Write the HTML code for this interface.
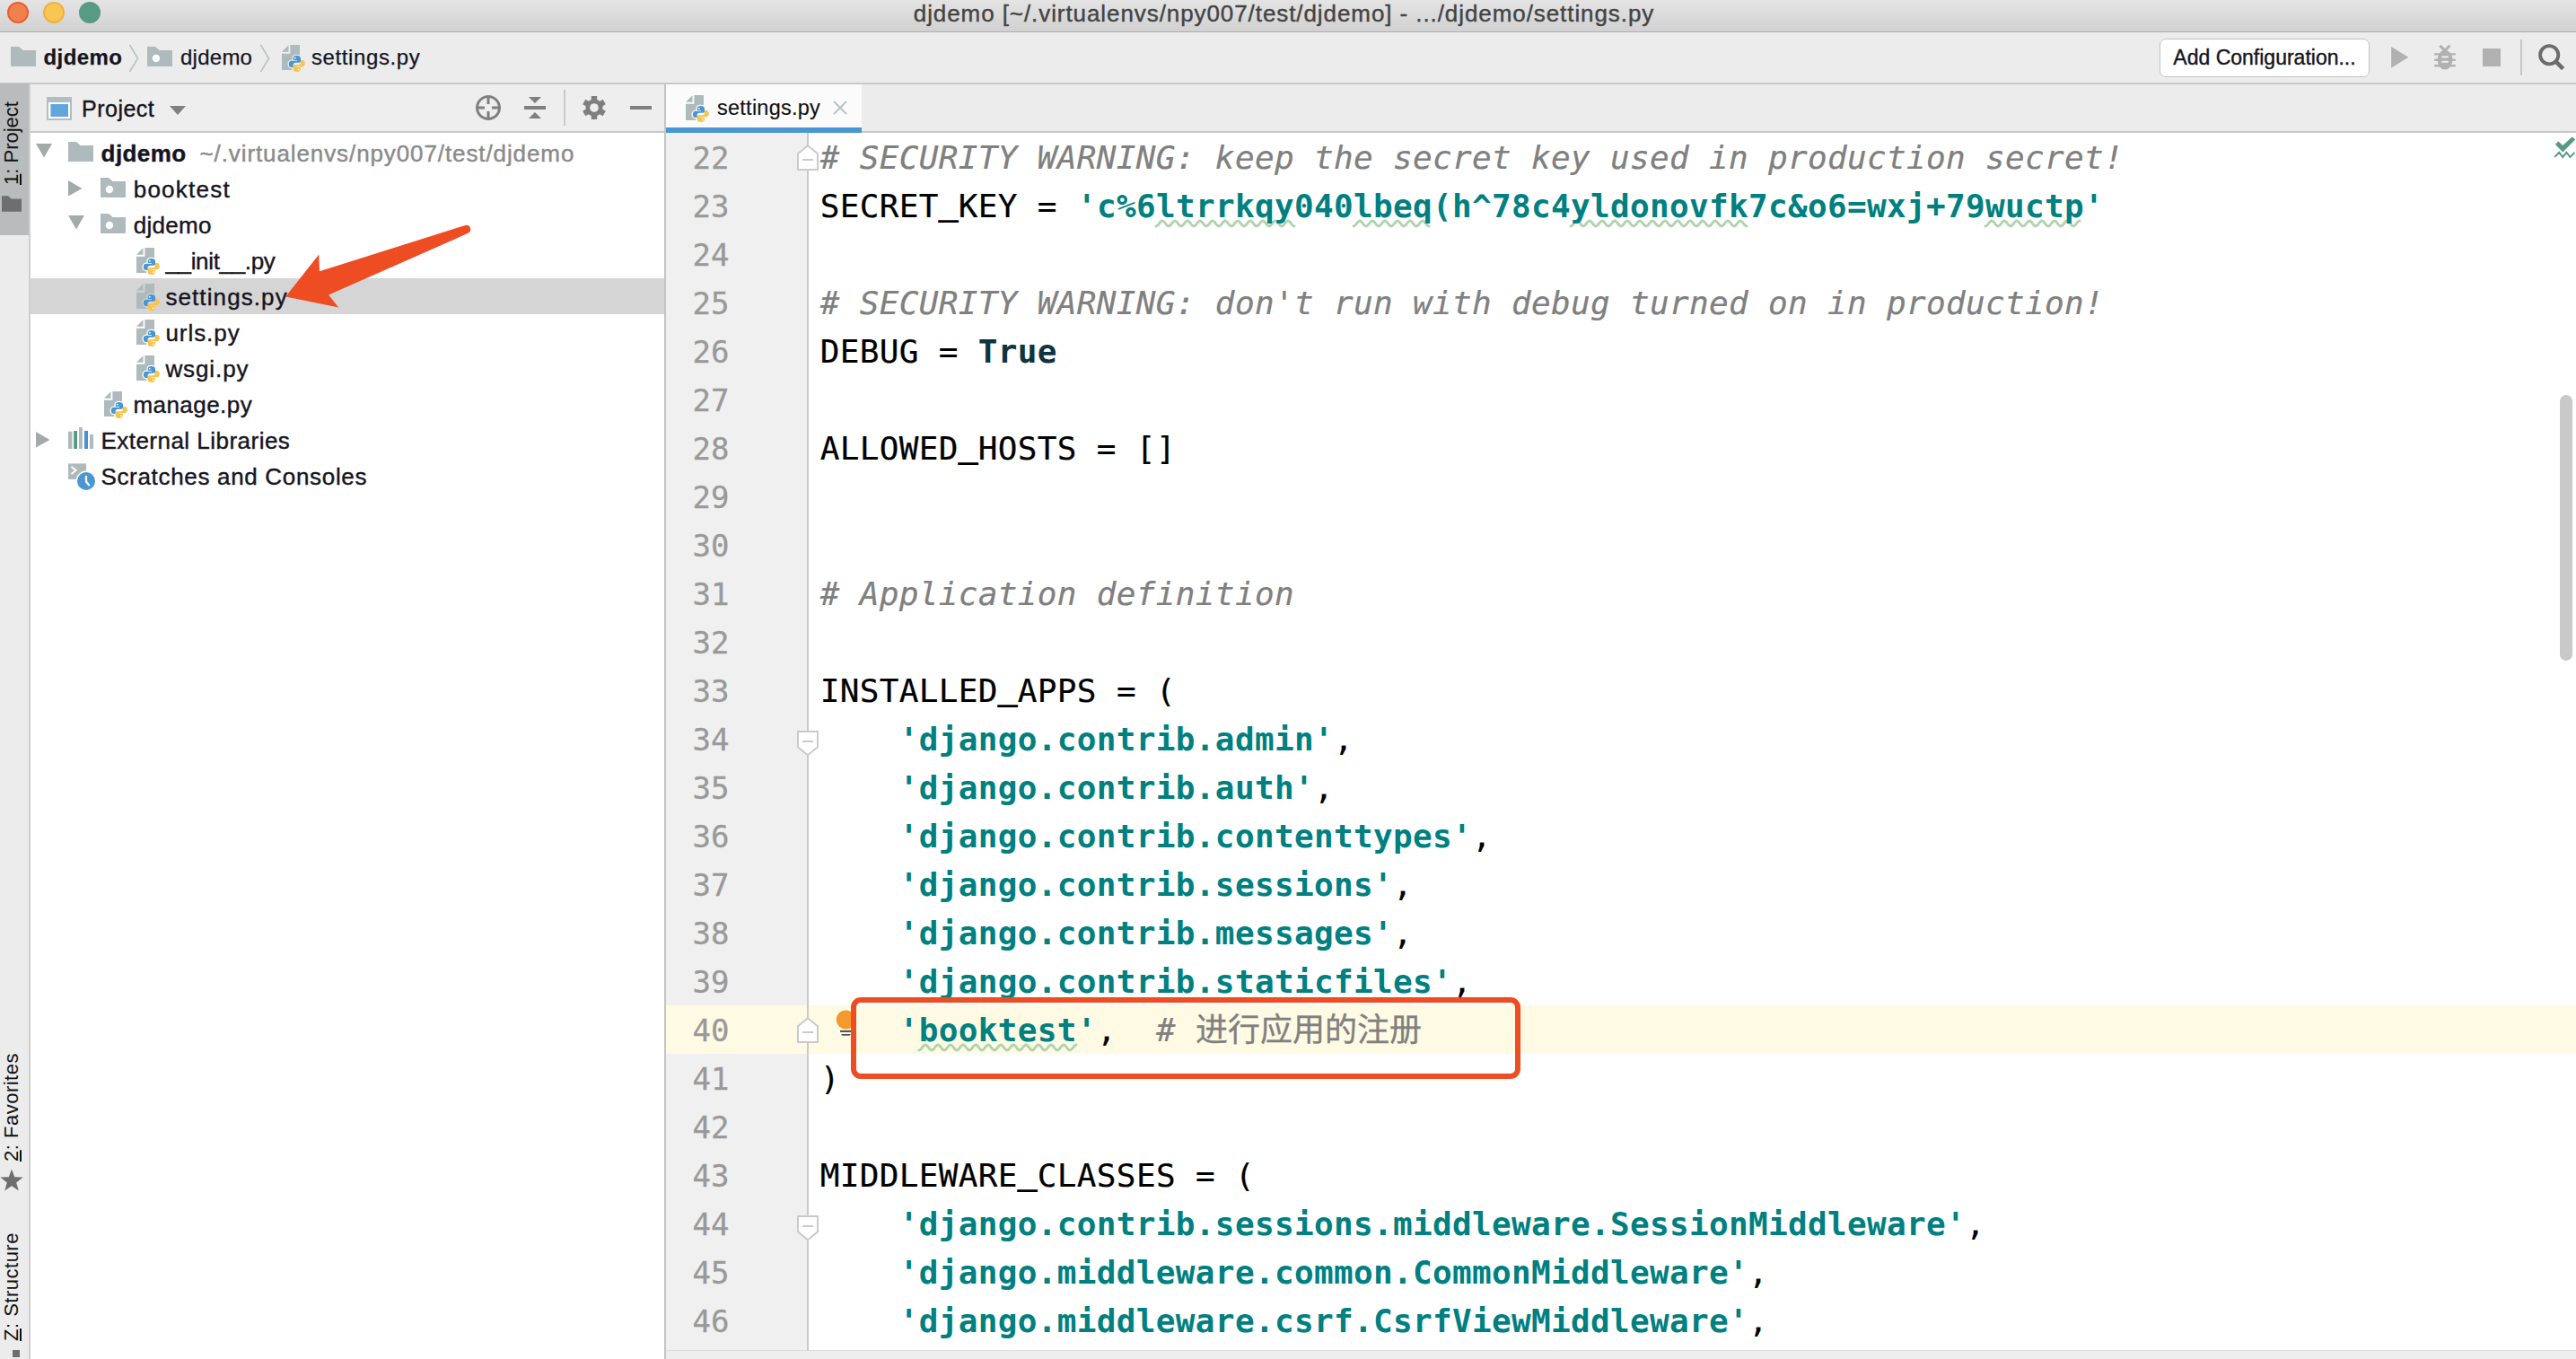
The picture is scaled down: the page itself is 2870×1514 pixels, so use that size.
<!DOCTYPE html>
<html lang="en"><head><meta charset="utf-8"><title>djdemo - settings.py</title>
<style>
html,body{margin:0;padding:0;}
body{width:2870px;height:1514px;overflow:hidden;position:relative;background:#fff;font-family:"Liberation Sans", "Noto Sans CJK SC", sans-serif;color:#111;}
.abs{position:absolute;display:block;}
.t{position:absolute;white-space:pre;line-height:1;-webkit-text-stroke:0.4px;}
#titlebar{left:0;top:0;width:2870px;height:35px;background:linear-gradient(#e4e4e4,#d1d1d1);border-bottom:1px solid #a9afaf;}
#title{left:0;top:-1.5px;width:2870px;height:35px;line-height:33px;text-align:center;font-size:26px;color:#444;letter-spacing:0.92px;text-indent:-9px;}
.light{border-radius:50%;width:24px;height:24px;top:2px;box-sizing:border-box;}
#nav{left:0;top:36px;width:2870px;height:56px;background:#ececec;border-bottom:2px solid #c9c9c9;box-sizing:content-box;}
.navt{font-size:24px;height:56px;line-height:56px;top:36px;color:#15151f;-webkit-text-stroke:0.25px;}
#strip{left:0;top:94px;width:32px;height:1420px;background:#ececec;border-right:2px solid #cfcfcf;}
#striptab{left:0;top:93px;width:32px;height:169px;background:#b8bcbc;}
.vt{position:absolute;white-space:pre;font-size:22px;line-height:26px;height:26px;transform-origin:0 0;transform:rotate(-90deg);color:#111;}
#phead{left:34px;top:94px;width:706px;height:52px;background:#eeeeee;border-bottom:2px solid #c9c9c9;}
#ptree{left:34px;top:148px;width:706px;height:1366px;background:#fff;}
#psel{left:34px;top:310px;width:706px;height:40px;background:#d5d5d5;}
#pdiv{left:740px;top:94px;width:2px;height:1420px;background:#c4c4c4;}
.tr{font-size:26px;height:40px;line-height:40px;color:#15151f;margin-top:0.5px;}
#tabbar{left:742px;top:94px;width:2128px;height:52px;background:#ececec;border-bottom:2px solid #c9c9c9;}
#tab{left:742px;top:94px;width:218px;height:48px;background:#fbfbfb;border-bottom:6px solid #4897d3;}
#gutter{left:742px;top:148px;width:157px;height:1356px;background:#f0f0f0;border-right:2px solid #cacaca;}
#curline{left:742px;top:1120px;width:2128px;height:54px;background:#fffae3;}
#bottom{left:742px;top:1504px;width:2128px;height:10px;background:#eeeeee;border-top:1px solid #dcdcdc;box-sizing:border-box;}
.ln{position:absolute;left:742px;width:70.5px;text-align:right;font-family:"DejaVu Sans Mono", "Liberation Mono", "Noto Sans CJK SC", monospace;font-size:34px;line-height:54px;height:54px;color:#999;margin-top:1px;-webkit-text-stroke:0.3px;}
.cl{position:absolute;left:913.8px;margin-top:0.7px;white-space:pre;font-family:"DejaVu Sans Mono", "Liberation Mono", "Noto Sans CJK SC", monospace;font-size:36px;line-height:54px;height:54px;color:#000;letter-spacing:0.33px;-webkit-text-stroke:0.22px;}
.us{position:relative;top:-3px;-webkit-text-stroke:1.2px #000;}
.c{color:#808080;font-style:italic;}
.s{color:#008080;font-weight:bold;-webkit-text-stroke:0;}
.k{color:#0e3440;font-weight:bold;-webkit-text-stroke:0;}
.cj{font-style:normal;font-family:"DejaVu Sans Mono","Noto Sans CJK SC",monospace;letter-spacing:0;line-height:0;-webkit-text-stroke:0.3px;}
</style></head><body>

<svg width="0" height="0" style="position:absolute"><defs><clipPath id="pyclip"><path d="M9.4 0 H20 V28 H0 V9.7 H9.4 Z"/></clipPath></defs></svg>
<div id="titlebar" class="abs"></div>
<div class="abs light" style="left:8px;background:#f0814f;border:2px solid #ec5e2e"></div>
<div class="abs light" style="left:48px;background:#f9c74f;border:2px solid #f2ae42"></div>
<div class="abs light" style="left:88px;background:#579b84;border:2px solid #579b84"></div>
<div id="title" class="t">djdemo [~/.virtualenvs/npy007/test/djdemo] - .../djdemo/settings.py</div>
<div id="nav" class="abs"></div>
<svg class="abs" style="left:12px;top:52px" width="28" height="22" viewBox="0 0 28 22"><path d="M0 0 H9 L13.6 4 H28 V22 H0 Z" fill="#afbabc"/></svg>
<div class="t navt" style="left:48.5px;top:36px;letter-spacing:0.4px;font-weight:bold">djdemo</div>
<svg class="abs" style="left:142px;top:48px" width="16" height="34" viewBox="0 0 16 34"><path d="M2.5 2 L11.5 17 L2.5 32" fill="none" stroke="#b9c2c4" stroke-width="1.6"/></svg>
<svg class="abs" style="left:164px;top:52px" width="28" height="22" viewBox="0 0 28 22"><path d="M0 0 H9 L13.6 4 H28 V22 H0 Z" fill="#afbabc"/><circle cx="9.9" cy="13" r="4.2" fill="#fff"/></svg>
<div class="t navt" style="left:201px;top:36px;letter-spacing:0.25px;">djdemo</div>
<svg class="abs" style="left:288px;top:48px" width="16" height="34" viewBox="0 0 16 34"><path d="M2.5 2 L11.5 17 L2.5 32" fill="none" stroke="#b9c2c4" stroke-width="1.6"/></svg>
<svg class="abs" style="left:314px;top:50px" width="28" height="31" viewBox="0 0 28 31">
<path d="M0 7.8 L7.5 0.2 V7.8 Z" fill="#afbabc"/>
<path d="M9.4 0 H20 V28 H0 V9.7 H9.4 Z" fill="#afbabc"/>
<g clip-path="url(#pyclip)"><g transform="translate(7.8,12)" fill="#ececec" stroke="#ececec" stroke-width="2.6"><path d="M9 0 C5.5 0 5 1.5 5 3 V5 H9.2 V5.8 H3 C1 5.8 0 7.5 0 9.5 C0 11.5 1 13 3 13 H4.8 V10.5 C4.8 8.8 6 7.8 7.5 7.8 H11.5 C12.8 7.8 13.2 6.8 13.2 5.8 V3 C13.2 1 11.5 0 9 0 Z"/><path d="M9 18 C12.5 18 13 16.5 13 15 V13 H8.8 V12.2 H15 C17 12.2 18 10.5 18 8.5 C18 6.5 17 5 15 5 H13.2 V7.5 C13.2 9.2 12 10.2 10.5 10.2 H6.5 C5.2 10.2 4.8 11.2 4.8 12.2 V15 C4.8 17 6.5 18 9 18 Z"/></g></g>
<g transform="translate(7.8,12)"><path d="M9 18 C12.5 18 13 16.5 13 15 V13 H8.8 V12.2 H15 C17 12.2 18 10.5 18 8.5 C18 6.5 17 5 15 5 H13.2 V7.5 C13.2 9.2 12 10.2 10.5 10.2 H6.5 C5.2 10.2 4.8 11.2 4.8 12.2 V15 C4.8 17 6.5 18 9 18 Z" fill="#f8c44c"/><path d="M9 0 C5.5 0 5 1.5 5 3 V5 H9.2 V5.8 H3 C1 5.8 0 7.5 0 9.5 C0 11.5 1 13 3 13 H4.8 V10.5 C4.8 8.8 6 7.8 7.5 7.8 H11.5 C12.8 7.8 13.2 6.8 13.2 5.8 V3 C13.2 1 11.5 0 9 0 Z" fill="#4a96d2"/>
<circle cx="7" cy="2.7" r="0.9" fill="#fff"/><circle cx="11" cy="15.3" r="0.9" fill="#fff"/></g></svg>
<div class="t navt" style="left:347px;top:36px;letter-spacing:0.6px;">settings.py</div>
<div class="abs" style="left:2406px;top:43px;width:232px;height:41px;background:#fff;border:1px solid #c4c4c4;border-radius:7px;"></div>
<div class="t " style="left:2406px;top:43px;width:234px;text-align:center;font-size:23px;line-height:43px;color:#15151f">Add Configuration...</div>
<svg class="abs" style="left:2660px;top:48px" width="200" height="40" viewBox="0 0 200 40" overflow="visible"><path d="M4.1 4 L23.3 15.85 L4.1 27.7 Z" fill="#b1b1b1"/><g fill="#b1b1b1"><ellipse cx="64" cy="18.7" rx="8.3" ry="10.9"/><rect x="52.2" y="11.2" width="23.6" height="2.3"/><rect x="52.2" y="17.6" width="23.6" height="2.4"/><rect x="52.2" y="24" width="23.6" height="2.4"/></g><path d="M58.3 2.7 L63.9 8.4 L69.4 2.7" fill="none" stroke="#b1b1b1" stroke-width="3"/><rect x="60.4" y="14.4" width="7.4" height="2" fill="#ececec"/><rect x="60.4" y="19.8" width="7.4" height="2.1" fill="#ececec"/><rect x="106" y="6.1" width="20" height="19.9" fill="#b1b1b1"/><rect x="148" y="-4" width="2" height="39.7" fill="#c6c6c6"/><circle cx="180.2" cy="13.3" r="10.1" fill="none" stroke="#6b6b6b" stroke-width="3.8"/><path d="M187.6 20.6 L195.6 28.6" stroke="#6b6b6b" stroke-width="4.6" stroke-linecap="butt"/></svg>
<div id="strip" class="abs"></div>
<div id="striptab" class="abs"></div>
<div class="vt" style="left:0px;top:206px;"><u>1</u>: Project</div>
<svg class="abs" style="left:2px;top:218px" width="22" height="18" viewBox="0 0 28 22"><path d="M0 0 H9 L13.6 4 H28 V22 H0 Z" fill="#6e6e6e"/></svg>
<div class="vt" style="left:0px;top:1294px;letter-spacing:0.5px"><u>2</u>: Favorites</div>
<svg class="abs" style="left:0px;top:1302px" width="26" height="26" viewBox="0 0 26 26"><path d="M13 0.5 L16.2 9.3 L25.6 9.6 L18.2 15.4 L20.8 24.5 L13 19.2 L5.2 24.5 L7.8 15.4 L0.4 9.6 L9.8 9.3 Z" fill="#6e6e6e"/></svg>
<div class="vt" style="left:0px;top:1494px;letter-spacing:0.5px"><u>Z</u>: Structure</div>
<div class="abs" style="left:14px;top:1504px;width:8px;height:8px;background:#6e6e6e"></div>
<div id="phead" class="abs"></div>
<div id="ptree" class="abs"></div>
<div id="psel" class="abs"></div>
<div id="pdiv" class="abs"></div>
<svg class="abs" style="left:52px;top:108px" width="28" height="26" viewBox="0 0 28 26"><rect x="0" y="0" width="28" height="26" fill="#b3bec1"/><rect x="2" y="6" width="24" height="18" fill="#fff"/><rect x="4.4" y="8" width="19.6" height="14" fill="#62a5dc"/></svg>
<div class="t " style="left:91px;top:94.6px;letter-spacing:0.5px;font-size:25px;line-height:52px;color:#15151f">Project</div>
<svg class="abs" style="left:189px;top:118px" width="18" height="10" viewBox="0 0 18 10"><path d="M0 0 H18 L9 10 Z" fill="#808080"/></svg>
<svg class="abs" style="left:520px;top:100px" width="216" height="42" viewBox="0 0 216 42"><g fill="#7f7f7f"><path fill-rule="evenodd" d="M24 6 a14 14 0 1 0 0.001 0 Z M24 9 a11 11 0 1 1 -0.001 0 Z"/><rect x="22.5" y="7" width="3" height="9"/><rect x="22.5" y="24" width="3" height="9"/><rect x="11" y="18.5" width="9" height="3"/><rect x="28" y="18.5" width="9" height="3"/><rect x="64" y="18" width="24" height="4"/><path d="M69 8 H83 L76 15 Z"/><path d="M69 32 H83 L76 25 Z"/><rect x="182" y="18" width="24" height="4"/></g><rect x="108" y="0" width="2" height="40" fill="#c9c9c9"/><g transform="translate(142,20)" fill="#7f7f7f"><path fill-rule="evenodd" d="M0 -9.5 a9.5 9.5 0 1 0 0.001 0 Z M0 -4.8 a4.8 4.8 0 1 1 -0.001 0 Z"/><rect x="-3.2" y="-13" width="6.4" height="6" transform="rotate(0)"/><rect x="-3.2" y="-13" width="6.4" height="6" transform="rotate(60)"/><rect x="-3.2" y="-13" width="6.4" height="6" transform="rotate(120)"/><rect x="-3.2" y="-13" width="6.4" height="6" transform="rotate(180)"/><rect x="-3.2" y="-13" width="6.4" height="6" transform="rotate(240)"/><rect x="-3.2" y="-13" width="6.4" height="6" transform="rotate(300)"/></g></svg>
<svg class="abs" style="left:40px;top:160px" width="18" height="16" viewBox="0 0 18 16"><path d="M0 0 H18 L9 15.5 Z" fill="#a3aaaa"/></svg>
<svg class="abs" style="left:76px;top:158px" width="28" height="22" viewBox="0 0 28 22"><path d="M0 0 H9 L13.6 4 H28 V22 H0 Z" fill="#afbabc"/></svg>
<div class="t tr" style="left:112.6px;top:150px;letter-spacing:0.4px;"><b>djdemo</b></div>
<div class="t tr" style="left:222.5px;top:150px;letter-spacing:0.9px;color:#8a8a8a">~/.virtualenvs/npy007/test/djdemo</div>
<svg class="abs" style="left:76px;top:201px" width="16" height="18" viewBox="0 0 16 18"><path d="M0 0 L15.5 9 L0 17.5 Z" fill="#a3aaaa"/></svg>
<svg class="abs" style="left:112px;top:198px" width="28" height="22" viewBox="0 0 28 22"><path d="M0 0 H9 L13.6 4 H28 V22 H0 Z" fill="#afbabc"/><circle cx="9.9" cy="13" r="4.2" fill="#fff"/></svg>
<div class="t tr" style="left:148.7px;top:190px;letter-spacing:1.25px;">booktest</div>
<svg class="abs" style="left:76px;top:240px" width="18" height="16" viewBox="0 0 18 16"><path d="M0 0 H18 L9 15.5 Z" fill="#a3aaaa"/></svg>
<svg class="abs" style="left:112px;top:238px" width="28" height="22" viewBox="0 0 28 22"><path d="M0 0 H9 L13.6 4 H28 V22 H0 Z" fill="#afbabc"/><circle cx="9.9" cy="13" r="4.2" fill="#fff"/></svg>
<div class="t tr" style="left:148.7px;top:230px;letter-spacing:0.3px;">djdemo</div>
<svg class="abs" style="left:152px;top:276px" width="28" height="31" viewBox="0 0 28 31">
<path d="M0 7.8 L7.5 0.2 V7.8 Z" fill="#afbabc"/>
<path d="M9.4 0 H20 V28 H0 V9.7 H9.4 Z" fill="#afbabc"/>
<g clip-path="url(#pyclip)"><g transform="translate(7.8,12)" fill="#fff" stroke="#fff" stroke-width="2.6"><path d="M9 0 C5.5 0 5 1.5 5 3 V5 H9.2 V5.8 H3 C1 5.8 0 7.5 0 9.5 C0 11.5 1 13 3 13 H4.8 V10.5 C4.8 8.8 6 7.8 7.5 7.8 H11.5 C12.8 7.8 13.2 6.8 13.2 5.8 V3 C13.2 1 11.5 0 9 0 Z"/><path d="M9 18 C12.5 18 13 16.5 13 15 V13 H8.8 V12.2 H15 C17 12.2 18 10.5 18 8.5 C18 6.5 17 5 15 5 H13.2 V7.5 C13.2 9.2 12 10.2 10.5 10.2 H6.5 C5.2 10.2 4.8 11.2 4.8 12.2 V15 C4.8 17 6.5 18 9 18 Z"/></g></g>
<g transform="translate(7.8,12)"><path d="M9 18 C12.5 18 13 16.5 13 15 V13 H8.8 V12.2 H15 C17 12.2 18 10.5 18 8.5 C18 6.5 17 5 15 5 H13.2 V7.5 C13.2 9.2 12 10.2 10.5 10.2 H6.5 C5.2 10.2 4.8 11.2 4.8 12.2 V15 C4.8 17 6.5 18 9 18 Z" fill="#f8c44c"/><path d="M9 0 C5.5 0 5 1.5 5 3 V5 H9.2 V5.8 H3 C1 5.8 0 7.5 0 9.5 C0 11.5 1 13 3 13 H4.8 V10.5 C4.8 8.8 6 7.8 7.5 7.8 H11.5 C12.8 7.8 13.2 6.8 13.2 5.8 V3 C13.2 1 11.5 0 9 0 Z" fill="#4a96d2"/>
<circle cx="7" cy="2.7" r="0.9" fill="#fff"/><circle cx="11" cy="15.3" r="0.9" fill="#fff"/></g></svg>
<div class="t tr" style="left:184.4px;top:270px;letter-spacing:-0.33px;">__init__.py</div>
<svg class="abs" style="left:152px;top:316px" width="28" height="31" viewBox="0 0 28 31">
<path d="M0 7.8 L7.5 0.2 V7.8 Z" fill="#afbabc"/>
<path d="M9.4 0 H20 V28 H0 V9.7 H9.4 Z" fill="#afbabc"/>
<g clip-path="url(#pyclip)"><g transform="translate(7.8,12)" fill="#d5d5d5" stroke="#d5d5d5" stroke-width="2.6"><path d="M9 0 C5.5 0 5 1.5 5 3 V5 H9.2 V5.8 H3 C1 5.8 0 7.5 0 9.5 C0 11.5 1 13 3 13 H4.8 V10.5 C4.8 8.8 6 7.8 7.5 7.8 H11.5 C12.8 7.8 13.2 6.8 13.2 5.8 V3 C13.2 1 11.5 0 9 0 Z"/><path d="M9 18 C12.5 18 13 16.5 13 15 V13 H8.8 V12.2 H15 C17 12.2 18 10.5 18 8.5 C18 6.5 17 5 15 5 H13.2 V7.5 C13.2 9.2 12 10.2 10.5 10.2 H6.5 C5.2 10.2 4.8 11.2 4.8 12.2 V15 C4.8 17 6.5 18 9 18 Z"/></g></g>
<g transform="translate(7.8,12)"><path d="M9 18 C12.5 18 13 16.5 13 15 V13 H8.8 V12.2 H15 C17 12.2 18 10.5 18 8.5 C18 6.5 17 5 15 5 H13.2 V7.5 C13.2 9.2 12 10.2 10.5 10.2 H6.5 C5.2 10.2 4.8 11.2 4.8 12.2 V15 C4.8 17 6.5 18 9 18 Z" fill="#f8c44c"/><path d="M9 0 C5.5 0 5 1.5 5 3 V5 H9.2 V5.8 H3 C1 5.8 0 7.5 0 9.5 C0 11.5 1 13 3 13 H4.8 V10.5 C4.8 8.8 6 7.8 7.5 7.8 H11.5 C12.8 7.8 13.2 6.8 13.2 5.8 V3 C13.2 1 11.5 0 9 0 Z" fill="#4a96d2"/>
<circle cx="7" cy="2.7" r="0.9" fill="#fff"/><circle cx="11" cy="15.3" r="0.9" fill="#fff"/></g></svg>
<div class="t tr" style="left:184.4px;top:310px;letter-spacing:1.1px;">settings.py</div>
<svg class="abs" style="left:152px;top:356px" width="28" height="31" viewBox="0 0 28 31">
<path d="M0 7.8 L7.5 0.2 V7.8 Z" fill="#afbabc"/>
<path d="M9.4 0 H20 V28 H0 V9.7 H9.4 Z" fill="#afbabc"/>
<g clip-path="url(#pyclip)"><g transform="translate(7.8,12)" fill="#fff" stroke="#fff" stroke-width="2.6"><path d="M9 0 C5.5 0 5 1.5 5 3 V5 H9.2 V5.8 H3 C1 5.8 0 7.5 0 9.5 C0 11.5 1 13 3 13 H4.8 V10.5 C4.8 8.8 6 7.8 7.5 7.8 H11.5 C12.8 7.8 13.2 6.8 13.2 5.8 V3 C13.2 1 11.5 0 9 0 Z"/><path d="M9 18 C12.5 18 13 16.5 13 15 V13 H8.8 V12.2 H15 C17 12.2 18 10.5 18 8.5 C18 6.5 17 5 15 5 H13.2 V7.5 C13.2 9.2 12 10.2 10.5 10.2 H6.5 C5.2 10.2 4.8 11.2 4.8 12.2 V15 C4.8 17 6.5 18 9 18 Z"/></g></g>
<g transform="translate(7.8,12)"><path d="M9 18 C12.5 18 13 16.5 13 15 V13 H8.8 V12.2 H15 C17 12.2 18 10.5 18 8.5 C18 6.5 17 5 15 5 H13.2 V7.5 C13.2 9.2 12 10.2 10.5 10.2 H6.5 C5.2 10.2 4.8 11.2 4.8 12.2 V15 C4.8 17 6.5 18 9 18 Z" fill="#f8c44c"/><path d="M9 0 C5.5 0 5 1.5 5 3 V5 H9.2 V5.8 H3 C1 5.8 0 7.5 0 9.5 C0 11.5 1 13 3 13 H4.8 V10.5 C4.8 8.8 6 7.8 7.5 7.8 H11.5 C12.8 7.8 13.2 6.8 13.2 5.8 V3 C13.2 1 11.5 0 9 0 Z" fill="#4a96d2"/>
<circle cx="7" cy="2.7" r="0.9" fill="#fff"/><circle cx="11" cy="15.3" r="0.9" fill="#fff"/></g></svg>
<div class="t tr" style="left:184.4px;top:350px;letter-spacing:0.95px;">urls.py</div>
<svg class="abs" style="left:152px;top:396px" width="28" height="31" viewBox="0 0 28 31">
<path d="M0 7.8 L7.5 0.2 V7.8 Z" fill="#afbabc"/>
<path d="M9.4 0 H20 V28 H0 V9.7 H9.4 Z" fill="#afbabc"/>
<g clip-path="url(#pyclip)"><g transform="translate(7.8,12)" fill="#fff" stroke="#fff" stroke-width="2.6"><path d="M9 0 C5.5 0 5 1.5 5 3 V5 H9.2 V5.8 H3 C1 5.8 0 7.5 0 9.5 C0 11.5 1 13 3 13 H4.8 V10.5 C4.8 8.8 6 7.8 7.5 7.8 H11.5 C12.8 7.8 13.2 6.8 13.2 5.8 V3 C13.2 1 11.5 0 9 0 Z"/><path d="M9 18 C12.5 18 13 16.5 13 15 V13 H8.8 V12.2 H15 C17 12.2 18 10.5 18 8.5 C18 6.5 17 5 15 5 H13.2 V7.5 C13.2 9.2 12 10.2 10.5 10.2 H6.5 C5.2 10.2 4.8 11.2 4.8 12.2 V15 C4.8 17 6.5 18 9 18 Z"/></g></g>
<g transform="translate(7.8,12)"><path d="M9 18 C12.5 18 13 16.5 13 15 V13 H8.8 V12.2 H15 C17 12.2 18 10.5 18 8.5 C18 6.5 17 5 15 5 H13.2 V7.5 C13.2 9.2 12 10.2 10.5 10.2 H6.5 C5.2 10.2 4.8 11.2 4.8 12.2 V15 C4.8 17 6.5 18 9 18 Z" fill="#f8c44c"/><path d="M9 0 C5.5 0 5 1.5 5 3 V5 H9.2 V5.8 H3 C1 5.8 0 7.5 0 9.5 C0 11.5 1 13 3 13 H4.8 V10.5 C4.8 8.8 6 7.8 7.5 7.8 H11.5 C12.8 7.8 13.2 6.8 13.2 5.8 V3 C13.2 1 11.5 0 9 0 Z" fill="#4a96d2"/>
<circle cx="7" cy="2.7" r="0.9" fill="#fff"/><circle cx="11" cy="15.3" r="0.9" fill="#fff"/></g></svg>
<div class="t tr" style="left:184.4px;top:390px;letter-spacing:0.9px;">wsgi.py</div>
<svg class="abs" style="left:116px;top:436px" width="28" height="31" viewBox="0 0 28 31">
<path d="M0 7.8 L7.5 0.2 V7.8 Z" fill="#afbabc"/>
<path d="M9.4 0 H20 V28 H0 V9.7 H9.4 Z" fill="#afbabc"/>
<g clip-path="url(#pyclip)"><g transform="translate(7.8,12)" fill="#fff" stroke="#fff" stroke-width="2.6"><path d="M9 0 C5.5 0 5 1.5 5 3 V5 H9.2 V5.8 H3 C1 5.8 0 7.5 0 9.5 C0 11.5 1 13 3 13 H4.8 V10.5 C4.8 8.8 6 7.8 7.5 7.8 H11.5 C12.8 7.8 13.2 6.8 13.2 5.8 V3 C13.2 1 11.5 0 9 0 Z"/><path d="M9 18 C12.5 18 13 16.5 13 15 V13 H8.8 V12.2 H15 C17 12.2 18 10.5 18 8.5 C18 6.5 17 5 15 5 H13.2 V7.5 C13.2 9.2 12 10.2 10.5 10.2 H6.5 C5.2 10.2 4.8 11.2 4.8 12.2 V15 C4.8 17 6.5 18 9 18 Z"/></g></g>
<g transform="translate(7.8,12)"><path d="M9 18 C12.5 18 13 16.5 13 15 V13 H8.8 V12.2 H15 C17 12.2 18 10.5 18 8.5 C18 6.5 17 5 15 5 H13.2 V7.5 C13.2 9.2 12 10.2 10.5 10.2 H6.5 C5.2 10.2 4.8 11.2 4.8 12.2 V15 C4.8 17 6.5 18 9 18 Z" fill="#f8c44c"/><path d="M9 0 C5.5 0 5 1.5 5 3 V5 H9.2 V5.8 H3 C1 5.8 0 7.5 0 9.5 C0 11.5 1 13 3 13 H4.8 V10.5 C4.8 8.8 6 7.8 7.5 7.8 H11.5 C12.8 7.8 13.2 6.8 13.2 5.8 V3 C13.2 1 11.5 0 9 0 Z" fill="#4a96d2"/>
<circle cx="7" cy="2.7" r="0.9" fill="#fff"/><circle cx="11" cy="15.3" r="0.9" fill="#fff"/></g></svg>
<div class="t tr" style="left:148.4px;top:430px;letter-spacing:0.45px;">manage.py</div>
<svg class="abs" style="left:40px;top:481px" width="16" height="18" viewBox="0 0 16 18"><path d="M0 0 L15.5 9 L0 17.5 Z" fill="#a3aaaa"/></svg>
<svg class="abs" style="left:76px;top:476px" width="28" height="24" viewBox="0 0 28 24"><rect x="0" y="4.7" width="4.5" height="19.3" fill="#b0babd"/><rect x="6.2" y="4" width="3.8" height="20" fill="#4e9a7f"/><rect x="12" y="0" width="3.8" height="24" fill="#b0babd"/><rect x="18" y="4" width="4" height="20" fill="#4592d4"/><rect x="24" y="8" width="4" height="16" fill="#b0babd"/></svg>
<div class="t tr" style="left:112.4px;top:470px;letter-spacing:0.48px;">External Libraries</div>
<svg class="abs" style="left:76px;top:516px" width="32" height="32" viewBox="0 0 32 32"><rect x="0" y="0.4" width="20" height="17.6" fill="#b0babd"/><path d="M3.5 4 L8.5 8 L3.5 12" fill="none" stroke="#fff" stroke-width="2"/><circle cx="20" cy="20" r="11.4" fill="#fff"/><circle cx="20" cy="20" r="10" fill="#4a96d2"/><path d="M20 14 V20.5 L23.5 25" fill="none" stroke="#fff" stroke-width="2.2"/></svg>
<div class="t tr" style="left:112.4px;top:510px;letter-spacing:0.68px;">Scratches and Consoles</div>
<svg class="abs" style="left:300px;top:230px" width="260" height="130" viewBox="300 230 260 130"><path d="M318.2 330.4 L355.3 283.5 L356 302.2 L518.3 251 A4.7 4.7 0 0 1 521.5 259.8 L366.1 328.4 L377.2 342.5 Z" fill="#ee4d23"/></svg>
<div id="tabbar" class="abs"></div>
<div id="tab" class="abs"></div>
<svg class="abs" style="left:764px;top:106px" width="28" height="31" viewBox="0 0 28 31">
<path d="M0 7.8 L7.5 0.2 V7.8 Z" fill="#afbabc"/>
<path d="M9.4 0 H20 V28 H0 V9.7 H9.4 Z" fill="#afbabc"/>
<g clip-path="url(#pyclip)"><g transform="translate(7.8,12)" fill="#fbfbfb" stroke="#fbfbfb" stroke-width="2.6"><path d="M9 0 C5.5 0 5 1.5 5 3 V5 H9.2 V5.8 H3 C1 5.8 0 7.5 0 9.5 C0 11.5 1 13 3 13 H4.8 V10.5 C4.8 8.8 6 7.8 7.5 7.8 H11.5 C12.8 7.8 13.2 6.8 13.2 5.8 V3 C13.2 1 11.5 0 9 0 Z"/><path d="M9 18 C12.5 18 13 16.5 13 15 V13 H8.8 V12.2 H15 C17 12.2 18 10.5 18 8.5 C18 6.5 17 5 15 5 H13.2 V7.5 C13.2 9.2 12 10.2 10.5 10.2 H6.5 C5.2 10.2 4.8 11.2 4.8 12.2 V15 C4.8 17 6.5 18 9 18 Z"/></g></g>
<g transform="translate(7.8,12)"><path d="M9 18 C12.5 18 13 16.5 13 15 V13 H8.8 V12.2 H15 C17 12.2 18 10.5 18 8.5 C18 6.5 17 5 15 5 H13.2 V7.5 C13.2 9.2 12 10.2 10.5 10.2 H6.5 C5.2 10.2 4.8 11.2 4.8 12.2 V15 C4.8 17 6.5 18 9 18 Z" fill="#f8c44c"/><path d="M9 0 C5.5 0 5 1.5 5 3 V5 H9.2 V5.8 H3 C1 5.8 0 7.5 0 9.5 C0 11.5 1 13 3 13 H4.8 V10.5 C4.8 8.8 6 7.8 7.5 7.8 H11.5 C12.8 7.8 13.2 6.8 13.2 5.8 V3 C13.2 1 11.5 0 9 0 Z" fill="#4a96d2"/>
<circle cx="7" cy="2.7" r="0.9" fill="#fff"/><circle cx="11" cy="15.3" r="0.9" fill="#fff"/></g></svg>
<div class="t " style="left:799px;top:94.5px;letter-spacing:0.25px;font-size:23.5px;line-height:50px;color:#111;-webkit-text-stroke:0.15px">settings.py</div>
<svg class="abs" style="left:928px;top:112px" width="16" height="16" viewBox="0 0 16 16"><path d="M1 1 L15 15 M15 1 L1 15" stroke="#b7c3c3" stroke-width="2" fill="none"/></svg>
<div id="curline" class="abs"></div>
<div id="gutter" class="abs"></div>
<div class="abs" style="left:742px;top:1120px;width:157px;height:54px;background:#fffae3"></div>
<div id="bottom" class="abs"></div>
<svg class="abs" style="left:1284.8px;top:242.5px" width="160" height="12" viewBox="-3 -6 160 12"><path d="M0 3.1 C2.6 3.1 4.4 -3.1 7 -3.1 S11.4 3.1 14 3.1 S18.4 -3.1 21 -3.1 S25.4 3.1 28 3.1 S32.4 -3.1 35 -3.1 S39.4 3.1 42 3.1 S46.4 -3.1 49 -3.1 S53.4 3.1 56 3.1 S60.4 -3.1 63 -3.1 S67.4 3.1 70 3.1 S74.4 -3.1 77 -3.1 S81.4 3.1 84 3.1 S88.4 -3.1 91 -3.1 S95.4 3.1 98 3.1 S102.4 -3.1 105 -3.1 S109.4 3.1 112 3.1 S116.4 -3.1 119 -3.1 S123.4 3.1 126 3.1 S130.4 -3.1 133 -3.1 S137.4 3.1 140 3.1 S144.4 -3.1 147 -3.1 S151.4 3.1 154 3.1" fill="none" stroke="#b1d3ae" stroke-width="3" stroke-linecap="round"/></svg>
<svg class="abs" style="left:1504.8px;top:242.5px" width="94" height="12" viewBox="-3 -6 94 12"><path d="M0 3.1 C2.6 3.1 4.4 -3.1 7 -3.1 S11.4 3.1 14 3.1 S18.4 -3.1 21 -3.1 S25.4 3.1 28 3.1 S32.4 -3.1 35 -3.1 S39.4 3.1 42 3.1 S46.4 -3.1 49 -3.1 S53.4 3.1 56 3.1 S60.4 -3.1 63 -3.1 S67.4 3.1 70 3.1 S74.4 -3.1 77 -3.1 S81.4 3.1 84 3.1" fill="none" stroke="#b1d3ae" stroke-width="3" stroke-linecap="round"/></svg>
<svg class="abs" style="left:1746.8px;top:242.5px" width="204" height="12" viewBox="-3 -6 204 12"><path d="M0 3.1 C2.6 3.1 4.4 -3.1 7 -3.1 S11.4 3.1 14 3.1 S18.4 -3.1 21 -3.1 S25.4 3.1 28 3.1 S32.4 -3.1 35 -3.1 S39.4 3.1 42 3.1 S46.4 -3.1 49 -3.1 S53.4 3.1 56 3.1 S60.4 -3.1 63 -3.1 S67.4 3.1 70 3.1 S74.4 -3.1 77 -3.1 S81.4 3.1 84 3.1 S88.4 -3.1 91 -3.1 S95.4 3.1 98 3.1 S102.4 -3.1 105 -3.1 S109.4 3.1 112 3.1 S116.4 -3.1 119 -3.1 S123.4 3.1 126 3.1 S130.4 -3.1 133 -3.1 S137.4 3.1 140 3.1 S144.4 -3.1 147 -3.1 S151.4 3.1 154 3.1 S158.4 -3.1 161 -3.1 S165.4 3.1 168 3.1 S172.4 -3.1 175 -3.1 S179.4 3.1 182 3.1 S186.4 -3.1 189 -3.1 S193.4 3.1 196 3.1" fill="none" stroke="#b1d3ae" stroke-width="3" stroke-linecap="round"/></svg>
<svg class="abs" style="left:2208.8px;top:242.5px" width="116" height="12" viewBox="-3 -6 116 12"><path d="M0 3.1 C2.6 3.1 4.4 -3.1 7 -3.1 S11.4 3.1 14 3.1 S18.4 -3.1 21 -3.1 S25.4 3.1 28 3.1 S32.4 -3.1 35 -3.1 S39.4 3.1 42 3.1 S46.4 -3.1 49 -3.1 S53.4 3.1 56 3.1 S60.4 -3.1 63 -3.1 S67.4 3.1 70 3.1 S74.4 -3.1 77 -3.1 S81.4 3.1 84 3.1 S88.4 -3.1 91 -3.1 S95.4 3.1 98 3.1 S102.4 -3.1 105 -3.1" fill="none" stroke="#b1d3ae" stroke-width="3" stroke-linecap="round"/></svg>
<svg class="abs" style="left:1020.8px;top:1160.5px" width="182" height="12" viewBox="-3 -6 182 12"><path d="M0 3.1 C2.6 3.1 4.4 -3.1 7 -3.1 S11.4 3.1 14 3.1 S18.4 -3.1 21 -3.1 S25.4 3.1 28 3.1 S32.4 -3.1 35 -3.1 S39.4 3.1 42 3.1 S46.4 -3.1 49 -3.1 S53.4 3.1 56 3.1 S60.4 -3.1 63 -3.1 S67.4 3.1 70 3.1 S74.4 -3.1 77 -3.1 S81.4 3.1 84 3.1 S88.4 -3.1 91 -3.1 S95.4 3.1 98 3.1 S102.4 -3.1 105 -3.1 S109.4 3.1 112 3.1 S116.4 -3.1 119 -3.1 S123.4 3.1 126 3.1 S130.4 -3.1 133 -3.1 S137.4 3.1 140 3.1 S144.4 -3.1 147 -3.1 S151.4 3.1 154 3.1 S158.4 -3.1 161 -3.1 S165.4 3.1 168 3.1 S172.4 -3.1 175 -3.1" fill="none" stroke="#b1d3ae" stroke-width="3" stroke-linecap="round"/></svg>
<div class="ln" style="top:148px">22</div>
<div class="cl" style="top:148px"><span class="c"># SECURITY WARNING: keep the secret key used in production secret!</span></div>
<div class="ln" style="top:202px">23</div>
<div class="cl" style="top:202px">SECRET<span class="us">_</span>KEY = <span class="s">'c%6</span><span class="s w">ltrrkqy</span><span class="s">040lbeq(h^78c4</span><span class="s w">yldonovfk</span><span class="s">7c&amp;o6=wxj+79</span><span class="s w">wuctp</span><span class="s">'</span></div>
<div class="ln" style="top:256px">24</div>
<div class="ln" style="top:310px">25</div>
<div class="cl" style="top:310px"><span class="c"># SECURITY WARNING: don't run with debug turned on in production!</span></div>
<div class="ln" style="top:364px">26</div>
<div class="cl" style="top:364px">DEBUG = <span class="k">True</span></div>
<div class="ln" style="top:418px">27</div>
<div class="ln" style="top:472px">28</div>
<div class="cl" style="top:472px">ALLOWED<span class="us">_</span>HOSTS = []</div>
<div class="ln" style="top:526px">29</div>
<div class="ln" style="top:580px">30</div>
<div class="ln" style="top:634px">31</div>
<div class="cl" style="top:634px"><span class="c"># Application definition</span></div>
<div class="ln" style="top:688px">32</div>
<div class="ln" style="top:742px">33</div>
<div class="cl" style="top:742px">INSTALLED<span class="us">_</span>APPS = (</div>
<div class="ln" style="top:796px">34</div>
<div class="cl" style="top:796px">    <span class="s">'django.contrib.admin'</span>,</div>
<div class="ln" style="top:850px">35</div>
<div class="cl" style="top:850px">    <span class="s">'django.contrib.auth'</span>,</div>
<div class="ln" style="top:904px">36</div>
<div class="cl" style="top:904px">    <span class="s">'django.contrib.contenttypes'</span>,</div>
<div class="ln" style="top:958px">37</div>
<div class="cl" style="top:958px">    <span class="s">'django.contrib.sessions'</span>,</div>
<div class="ln" style="top:1012px">38</div>
<div class="cl" style="top:1012px">    <span class="s">'django.contrib.messages'</span>,</div>
<div class="ln" style="top:1066px">39</div>
<div class="cl" style="top:1066px">    <span class="s">'django.contrib.staticfiles'</span>,</div>
<div class="ln" style="top:1120px">40</div>
<div class="cl" style="top:1120px">    <span class="s">'</span><span class="s w">booktest</span><span class="s">'</span>,  <span class="c"># <span class="cj">进行应用的注册</span></span></div>
<div class="ln" style="top:1174px">41</div>
<div class="cl" style="top:1174px">)</div>
<div class="ln" style="top:1228px">42</div>
<div class="ln" style="top:1282px">43</div>
<div class="cl" style="top:1282px">MIDDLEWARE<span class="us">_</span>CLASSES = (</div>
<div class="ln" style="top:1336px">44</div>
<div class="cl" style="top:1336px">    <span class="s">'django.contrib.sessions.middleware.SessionMiddleware'</span>,</div>
<div class="ln" style="top:1390px">45</div>
<div class="cl" style="top:1390px">    <span class="s">'django.middleware.common.CommonMiddleware'</span>,</div>
<div class="ln" style="top:1444px">46</div>
<div class="cl" style="top:1444px">    <span class="s">'django.middleware.csrf.CsrfViewMiddleware'</span>,</div>
<svg class="abs" style="left:887px;top:161px" width="26" height="30" viewBox="0 0 26 30"><path d="M13 1.2 L24 10.2 V28 H2 V10.2 Z" fill="#fff" stroke="#cacaca" stroke-width="2"/><rect x="7" y="16" width="12" height="2" fill="#cacaca"/></svg>
<svg class="abs" style="left:887px;top:814px" width="26" height="30" viewBox="0 0 26 30"><path d="M2 1 H24 V18.2 L13 27.3 L2 18.2 Z" fill="#fff" stroke="#cacaca" stroke-width="2"/><rect x="7" y="11" width="12" height="2" fill="#cacaca"/></svg>
<svg class="abs" style="left:887px;top:1133px" width="26" height="30" viewBox="0 0 26 30"><path d="M13 1.2 L24 10.2 V28 H2 V10.2 Z" fill="#fff" stroke="#cacaca" stroke-width="2"/><rect x="7" y="16" width="12" height="2" fill="#cacaca"/></svg>
<svg class="abs" style="left:887px;top:1354px" width="26" height="30" viewBox="0 0 26 30"><path d="M2 1 H24 V18.2 L13 27.3 L2 18.2 Z" fill="#fff" stroke="#cacaca" stroke-width="2"/><rect x="7" y="11" width="12" height="2" fill="#cacaca"/></svg>
<svg class="abs" style="left:930px;top:1124px" width="24" height="32" viewBox="0 0 24 32"><circle cx="12.4" cy="12" r="10.6" fill="#f4992e"/><rect x="6" y="23.8" width="13" height="2.2" fill="#555"/><path d="M7 28 H18 L16.5 29.8 H8.5 Z" fill="#555"/></svg>
<div class="abs" style="left:948px;top:1111px;width:734px;height:79px;border:6px solid #ee4d23;border-radius:11px;"></div>
<div class="abs" style="left:2852px;top:440px;width:14px;height:296px;border-radius:7px;background:#c9c9c9"></div>
<svg class="abs" style="left:2844px;top:152px" width="26" height="26" viewBox="0 0 26 26"><path d="M2.9 8.75 L6.4 5.4 L11.25 10.1 L21.6 0.4 L25.2 3.5 L11.25 17.6 Z" fill="#559a84"/><path d="M2.2 22.9 L7.3 17.8 L11.25 23.1 L15.4 17.8 L19.4 23.1 L24.3 18" fill="none" stroke="#559a84" stroke-width="1.9"/></svg>
</body></html>
